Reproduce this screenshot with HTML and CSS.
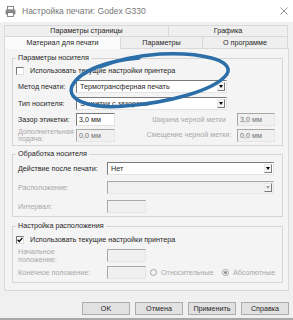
FILE: index.html
```html
<!DOCTYPE html>
<html lang="ru">
<head>
	<meta charset="UTF-8">
	<title>Настройка печати: Godex G330</title>
	<link rel="stylesheet" href="styles.css">
</head>
<body>
	<div class="window">
		<div class="titlebar">
			<svg class="app-icon" width="11" height="11" viewBox="0 0 11 11">
				<rect x="2.5" y="0.5" width="6" height="3.5" fill="#fff" stroke="#6a6a6a" stroke-width="0.8"/>
				<rect x="0.5" y="3.5" width="10" height="5" rx="1.2" fill="#8c8c8c"/>
				<rect x="2.5" y="6.5" width="6" height="4" fill="#fff" stroke="#6a6a6a" stroke-width="0.8"/>
			</svg>
			<span class="title">Настройка печати: Godex G330</span>
			<svg class="close" width="8" height="8" viewBox="0 0 8 8">
				<path d="M0.5 0.5 L7.5 7.5 M7.5 0.5 L0.5 7.5" stroke="#8a8a8a" stroke-width="0.9"/>
			</svg>
		</div>

		<div class="dialog">
			<div class="tabs">
				<div class="tab-row back">
					<div class="tab page">Параметры страницы</div>
					<div class="tab graphics">Графика</div>
				</div>
				<div class="tab-row front">
					<div class="tab media selected">Материал для печати</div>
					<div class="tab params">Параметры</div>
					<div class="tab about">О программе</div>
				</div>
			</div>

			<div class="panel">
				<fieldset class="group g1">
					<legend>Параметры носителя</legend>
					<div class="row check-row">
						<span class="checkbox"></span>
						<span>Использовать текущие настройки принтера</span>
					</div>
					<div class="row sel-row">
						<span class="lbl">Метод печати:</span>
						<div class="select wide"><span>Термотрансферная печать</span><span class="arrow"></span></div>
					</div>
					<div class="row sel-row">
						<span class="lbl">Тип носителя:</span>
						<div class="select wide"><span>Этикетки с зазорами</span><span class="arrow"></span></div>
					</div>
					<div class="row gap-row">
						<span class="lbl">Зазор этикетки:</span>
						<div class="field short">3,0 мм</div>
						<span class="lbl2 off">Ширина черной метки</span>
						<div class="field short2 disabled">3,0 мм</div>
					</div>
					<div class="row feed-row">
						<span class="lbl off two">Дополнительная<br>подача:</span>
						<div class="field short disabled">0,0 мм</div>
						<span class="lbl2 off">Смещение черной метки:</span>
						<div class="field short2 disabled">0,0 мм</div>
					</div>
				</fieldset>

				<fieldset class="group g2">
					<legend>Обработка носителя</legend>
					<div class="row first">
						<span class="lbl">Действие после печати:</span>
						<div class="select long"><span>Нет</span><span class="arrow"></span></div>
					</div>
					<div class="row">
						<span class="lbl off">Расположение:</span>
						<div class="select long disabled"><span></span><span class="arrow"></span></div>
					</div>
					<div class="row">
						<span class="lbl off">Интервал:</span>
						<div class="field short disabled"></div>
					</div>
				</fieldset>

				<fieldset class="group g3">
					<legend>Настройка расположения</legend>
					<div class="row check-row">
						<span class="checkbox">
							<svg width="6" height="6" viewBox="0 0 6 6"><path d="M0.6 2.8 L2.2 4.5 L5.4 0.9" fill="none" stroke="#000" stroke-width="1.3"/></svg>
						</span>
						<span>Использовать текущие настройки принтера</span>
					</div>
					<div class="row">
						<span class="lbl off two">Начальное<br>положение:</span>
						<div class="field short disabled"></div>
					</div>
					<div class="row">
						<span class="lbl off">Конечное положение:</span>
						<div class="field short disabled"></div>
						<span class="option rel"><span class="radio"></span>Относительные</span>
						<span class="option"><span class="radio on"></span>Абсолютные</span>
					</div>
				</fieldset>
			</div>

			<div class="buttons">
				<div class="button">OK</div>
				<div class="button">Отмена</div>
				<div class="button">Применить</div>
				<div class="button">Справка</div>
			</div>
		</div>

		<!-- пометка маркером поверх окна -->
		<svg class="mark" width="293" height="320" viewBox="0 0 293 320">
			<path d="M139 58 C110 60 80 70 72 86 C66 101 92 109 125 106 C166 103 215 91 227 74 C235 60 200 52 160 54 C132 56 112 62 100 67" fill="none" stroke="#2b6ea8" stroke-width="3.5" stroke-linecap="round"/>
		</svg>
	</div>
</body>
</html>
```

FILE: styles.css
```css
*{margin: 0;padding: 0;box-sizing: border-box;}
body{
	width: 293px;
	height: 320px;
	overflow: hidden;
	background: #f0f0f0;
	font: 7.2px/10px "Liberation Sans", Arial, sans-serif;
	color: #262626;
}
.window{
	position: relative;
	height: 320px;
	border-bottom: 2px solid #a8a8a8;
}
.titlebar{
	height: 22px;
	background: #fff;
	display: flex;
	align-items: center;
	padding: 0 5px 0 5px;
}
.app-icon{
	margin-right: 6px;
	flex: none;
}
.title{
	font-size: 8.5px;
	color: #767676;
}
.close{
	margin-left: auto;
}

.dialog{
	padding: 3px 4px 0 4px;
}
.tab-row{
	display: flex;
}
.tab{
	border: 1px solid #d9d9d9;
	border-bottom: none;
	background: #efefef;
	text-align: center;
}
.tab + .tab{
	margin-left: -1px;
}
.back{
	height: 11px;
}
.back .tab{
	line-height: 10px;
}
.page{ width: 165px; }
.graphics{ width: 120px; }
.front{
	height: 12px;
}
.front .tab{
	line-height: 11px;
}
.media{ width: 117px; }
.params{ width: 83px; }
.about{ width: 86px; }
.tab.selected{
	background: #fbfbfb;
	height: 13px;
	position: relative;
	z-index: 1;
}

.panel{
	border: 1px solid #d9d9d9;
	background: #f4f4f4;
	padding: 4px 5px 7px 7px;
}
.group{
	border: 1px solid #d5d5d5;
	padding: 0 4px 3px 5px;
	min-inline-size: 0;
}
.group legend{
	margin-left: -2px;
	padding: 0 2px;
	line-height: 10px;
}
.g2{ margin-top: 3px; }
.g3{ margin-top: 4px; }

.row{
	display: flex;
	align-items: center;
	height: 13px;
	white-space: nowrap;
}
.off{
	color: #a8a8a8;
}
.lbl{
	flex: none;
}
.two{
	line-height: 7.5px;
}
.g1 .lbl{ width: 58px; }
.g2 .lbl,
.g3 .lbl{ width: 89px; }

.check-row{
	height: 10px;
	margin-top: 3px;
	margin-left: -2px;
}
.g3 .check-row{ margin-top: 5px; }
.checkbox{
	width: 8px;
	height: 8px;
	flex: none;
	margin-right: 6px;
	background: #fff;
	border: 1px solid;
	border-color: #777 #dedede #dedede #777;
	display: flex;
	align-items: center;
	justify-content: center;
}
.sel-row{ margin-top: 4px; }
.gap-row{ margin-top: 3px; }
.feed-row{
	margin-top: 2px;
	height: 14px;
}
.g2 .row{ margin-top: 6px; }
.g2 .row.first{ margin-top: 3px; }
.g3 .row{ margin-top: 4px; }

.field{
	height: 13px;
	flex: none;
	background: #fff;
	border: 1px solid;
	border-color: #7a7a7a #e3e3e3 #e3e3e3 #7a7a7a;
	padding-left: 2px;
	line-height: 11px;
}
.field.disabled{
	background: #f0f0f0;
	border-color: #a8a8a8 #e6e6e6 #e6e6e6 #a8a8a8;
	color: #707070;
}
.short{ width: 39px; }
.short2{
	width: 38px;
	margin-left: 4px;
}
.lbl2{
	width: 88px;
	margin-left: 30px;
	text-align: center;
	flex: none;
}

.select{
	display: flex;
	align-items: center;
	height: 13px;
	flex: none;
	background: #fff;
	border: 1px solid;
	border-color: #7a7a7a #e3e3e3 #e3e3e3 #7a7a7a;
	padding-left: 3px;
}
.select.wide{ width: 151px; }
.select.long{ width: 167px; }
.select.disabled{
	background: #f0f0f0;
	border-color: #a8a8a8 #e6e6e6 #e6e6e6 #a8a8a8;
}
.arrow{
	margin-left: auto;
	margin-right: 1px;
	width: 8px;
	height: 9px;
	border: 1px solid;
	border-color: #e8e8e8 #7a7a7a #7a7a7a #e8e8e8;
	background: #f4f4f4;
	display: flex;
	align-items: center;
	justify-content: center;
}
.arrow::after{
	content: "";
	border-left: 2px solid transparent;
	border-right: 2px solid transparent;
	border-top: 3px solid #000;
}
.select.disabled .arrow::after{
	border-top-color: #a0a0a0;
}

.option{
	display: flex;
	align-items: center;
	color: #a8a8a8;
}
.option.rel{
	width: 72px;
	margin-left: 4px;
}
.radio{
	width: 7px;
	height: 7px;
	border-radius: 50%;
	border: 1px solid #a6a6a6;
	background: #f4f4f4;
	margin-right: 4px;
	display: flex;
	align-items: center;
	justify-content: center;
}
.radio.on::after{
	content: "";
	width: 3px;
	height: 3px;
	border-radius: 50%;
	background: #8a8a8a;
}

.buttons{
	display: flex;
	justify-content: flex-end;
	gap: 5px;
	margin-top: 11px;
}
.button{
	width: 48px;
	height: 13px;
	border: 1px solid #adadad;
	background: #e1e1e1;
	text-align: center;
	line-height: 11px;
}

.mark{
	position: absolute;
	left: 0;
	top: 0;
	pointer-events: none;
}
```
